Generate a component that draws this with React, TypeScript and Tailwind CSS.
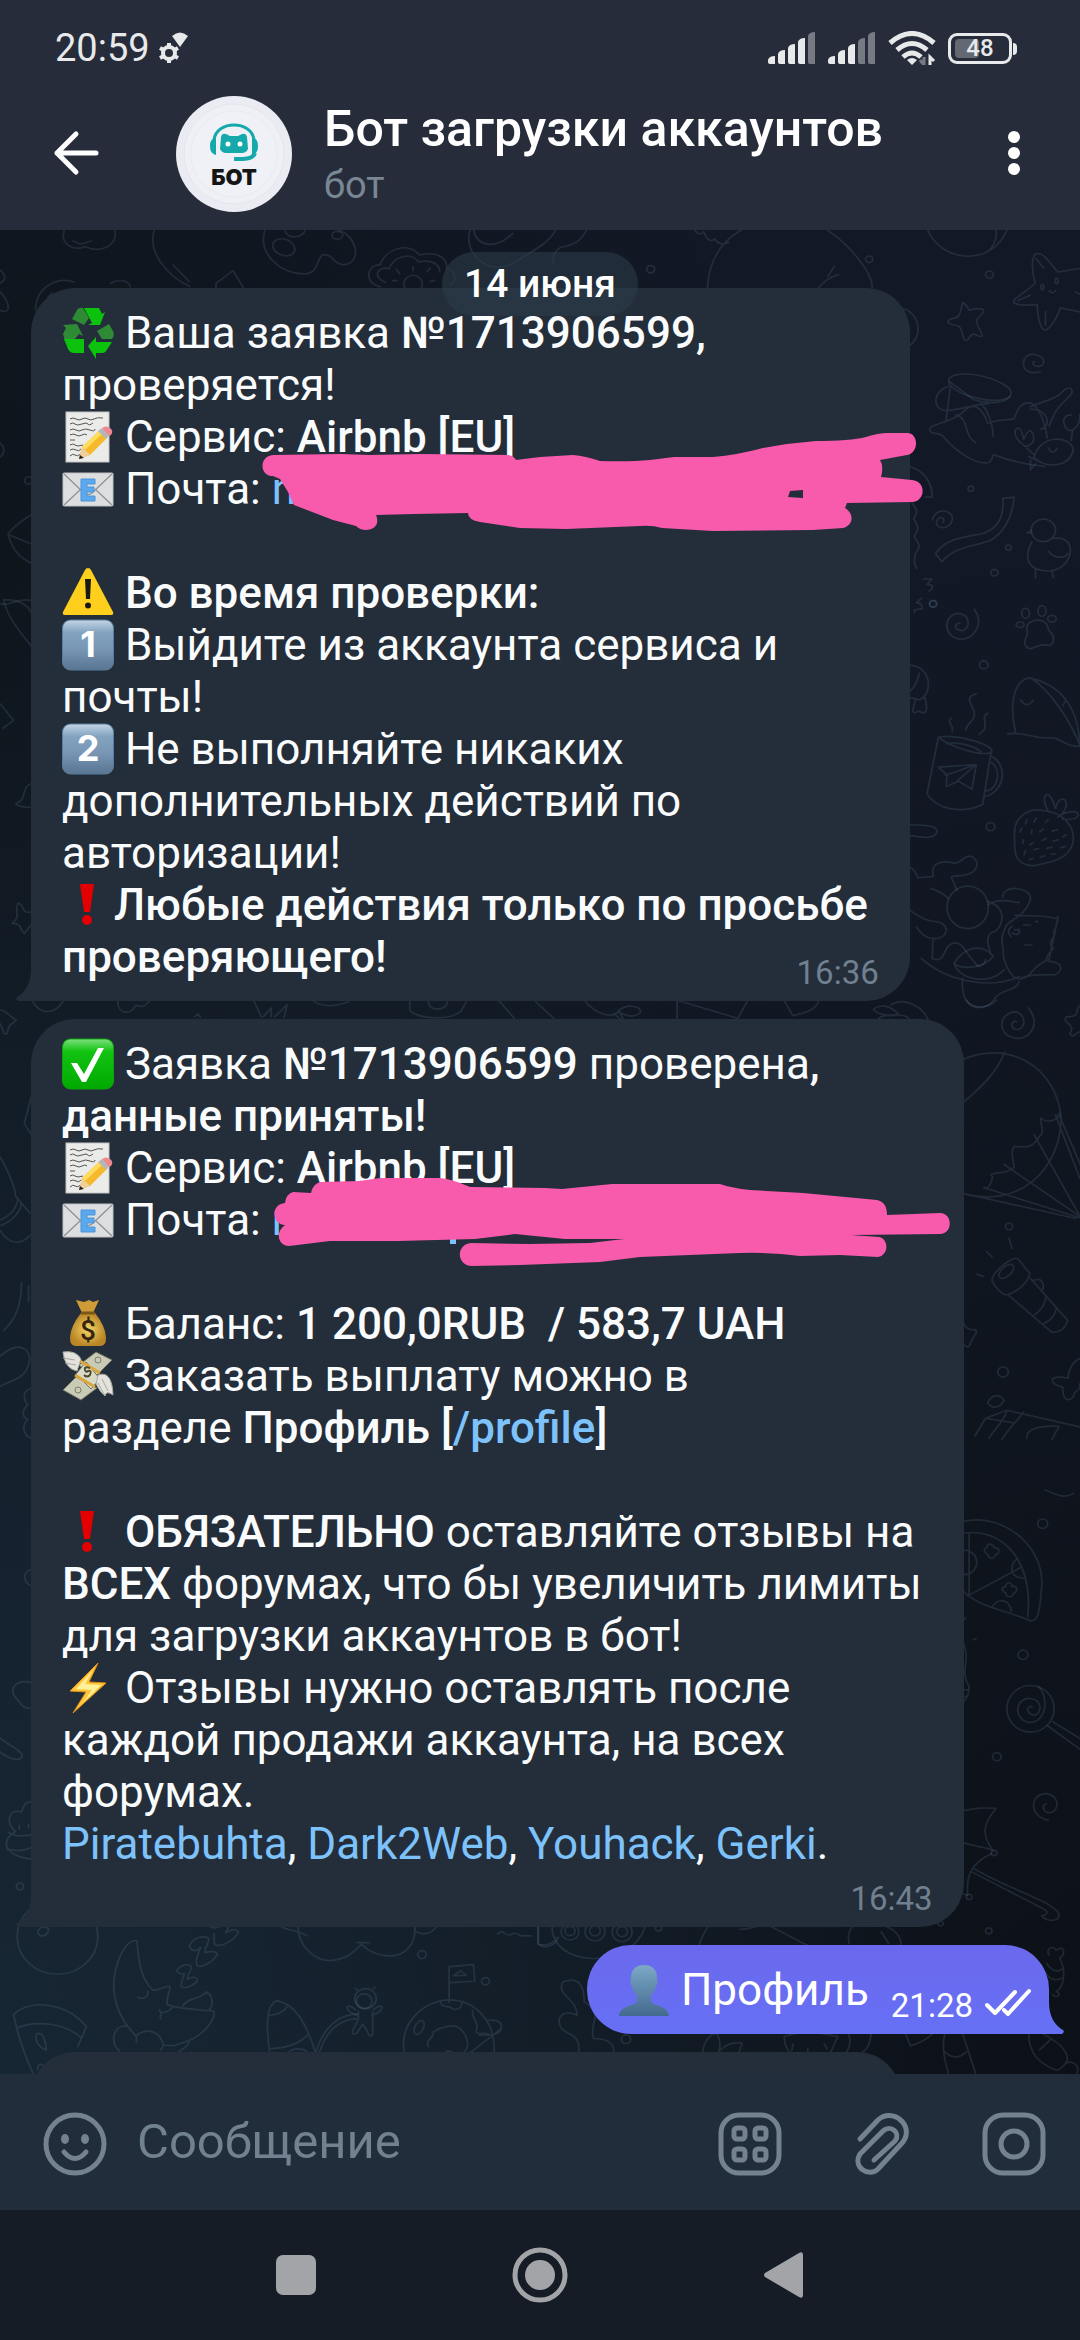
import React from 'react';

const Emoji: React.FC<{ label: string; children: React.ReactNode }> = ({ label, children }) => (
  <svg viewBox="0 0 52 52" role="img" aria-label={label} className="inline-block h-[52px] w-[52px] align-top">
    {children}
  </svg>
);

const Recycle = () => (
  <Emoji label="recycle">
    <path d="M22 1h15l3 6 3-2-5 13H26l4-2-8-15Z" fill="#0cc20c" />
    <path d="M21 1l6 10-5 7-12-6 5-9q2-3 6-2Z" fill="#2f8a35" />
    <path d="M1 18l14-1 6 12-4-2-5 6-9 1-2-7 3-6Z" fill="#2f8a35" />
    <path d="M2 32h20v14H12q-4 0-6-4Z" fill="#0cc20c" />
    <path d="M47 17l4 7q2 4-1 8H40l-5-8 12-7Z" fill="#2f8a35" />
    <path d="M26 39l8-9v5h16l-6 9q-1 2-5 2h-5v6Z" fill="#0cc20c" />
  </Emoji>
);

const Memo = () => (
  <Emoji label="memo">
    <rect x="4" y="1" width="43" height="50" fill="#ebebea" stroke="#c4c4c4" />
    <g stroke="#555" strokeWidth="1" fill="none">
      <path d="M8 8q3-2 6 0t6 0 6 0 6 0 9-1M8 13q3-2 5 0t7 0 6 0 5-1M8 19q3-2 6 0t6 0 8 0 5-1M8 24q3-2 6 0t6 0 5 0" />
      <path d="M8 29h5M8 34q3-2 5 0t8 0M8 39q3-2 6 0t5-1M8 45q3-3 5-1t6-1" />
    </g>
    <path d="M17 48l3-12 18-17 8 7-18 18Z" fill="#f6b92c" />
    <path d="M20 36l18-17 3 3-18 17Z" fill="#ffdc5b" />
    <path d="M17 48l3-12 8 8Z" fill="#efcf9d" />
    <path d="M17 48l1-4 4 3Z" fill="#222" />
    <path d="M36 20l4-3 7 7-3 4Z" fill="#b4b7ba" />
    <path d="M40 17q4-3 8 0t1 7l-2 1Z" fill="#ee8a8f" />
  </Emoji>
);

const Mail = () => (
  <Emoji label="e-mail">
    <rect x="1" y="10" width="50" height="33" rx="1" fill="#dddee0" stroke="#bfc0c2" />
    <path d="M2 11l20 19q4 3 8 0l20-19M2 42l17-16M50 42L33 26" fill="none" stroke="#909396" strokeWidth="1.3" />
    <path d="M19 16h14v5h-8v3h7v5h-7v4h8v5H19Z" fill="#5aa8ee" stroke="#4d93d6" />
  </Emoji>
);

const Warning = () => (
  <Emoji label="warning">
    <path d="M26 1q2 0 3 2l22 42q1 3-2 3H3q-3 0-2-3L23 3q1-2 3-2Z" fill="#ffcf1d" />
    <path d="M23 12h6l-1 20h-4Z" fill="#1b1a12" />
    <circle cx="26" cy="38.500" r="3" fill="#1b1a12" />
  </Emoji>
);

const Keycap: React.FC<{ digit: string }> = ({ digit }) => (
  <Emoji label={`keycap ${digit}`}>
    <defs>
      <linearGradient id={`key${digit}`} x2="0" y2="1">
        <stop offset="0" stopColor="#c2d5e3" />
        <stop offset=".25" stopColor="#83a3c0" />
        <stop offset=".6" stopColor="#7795b3" />
        <stop offset="1" stopColor="#587694" />
      </linearGradient>
    </defs>
    <rect x=".5" y="1" width="51" height="50" rx="8" fill={`url(#key${digit})`} stroke="#5b7d9d" />
    <text x="26" y="38" textAnchor="middle" className="fill-white font-[Inter] text-[36px] font-bold">{digit}</text>
  </Emoji>
);

const Exclamation = () => (
  <Emoji label="exclamation">
    <path d="M18 5h14l-4 28h-6Z" fill="#e20000" />
    <circle cx="25" cy="41" r="5" fill="#e20000" />
  </Emoji>
);

const Check = () => (
  <Emoji label="check">
    <defs>
      <linearGradient id="check" x2="0" y2="1">
        <stop offset="0" stopColor="#7be07b" />
        <stop offset=".25" stopColor="#12c312" />
        <stop offset="1" stopColor="#00a900" />
      </linearGradient>
    </defs>
    <rect x=".5" y="1" width="51" height="50" rx="8" fill="url(#check)" stroke="#10a010" />
    <path d="M9 25h6l7 11L36 10h6L24 44h-4Z" fill="#fff" />
  </Emoji>
);

const MoneyBag = () => (
  <Emoji label="money bag">
    <defs>
      <radialGradient id="bag">
        <stop offset="0" stopColor="#f6d566" />
        <stop offset="1" stopColor="#b98525" />
      </radialGradient>
    </defs>
    <path d="M19 15q-11 14-11 25 0 8 6 8h24q6 0 6-8 0-11-11-25Z" fill="url(#bag)" />
    <path d="M14 2l8 2 5-2 4 2 6-2-6 13H20Z" fill="#cf9b38" />
    <path d="M19 15h14" stroke="#7d5715" strokeWidth="3" />
    <text x="26" y="42" textAnchor="middle" className="fill-[#35250e] font-[Roboto] text-[28px] font-medium">$</text>
  </Emoji>
);

const MoneyWings = () => (
  <Emoji label="money with wings">
    <path d="M1 40l13-13 21 11-16 12Z" fill="#c9cbb6" stroke="#6c705c" />
    <path d="M17 15L34 2l16 8-18 18Z" fill="#c9cbb6" stroke="#6c705c" />
    <path d="M14 24l10-12 14 17-9 10Z" fill="#d9dbc8" stroke="#6c705c" />
    <path d="M18 11l20 12M13 25l20 12" stroke="#dba63b" strokeWidth="3" />
    <path d="M1 2q13-2 18 7l-4 12Q3 19 1 2Zm0 6l12 2M3 13l11 2" fill="#e4e2dc" stroke="#aaa9a0" />
    <path d="M36 25q14-5 15 20-7-5-8 1-5-4-9-12Zm4 4l6 12m-10-8l7 13" fill="#e4e2dc" stroke="#aaa9a0" />
    <path d="M28 18q-6-2-5 2 1 3 3 1 4-1 2 4-3 3-6 0" fill="none" stroke="#4d4a2c" strokeWidth="2" />
    <circle cx="36" cy="10" r="3" fill="none" stroke="#7c806a" />
    <circle cx="16" cy="40" r="3" fill="none" stroke="#7c806a" />
  </Emoji>
);

const Lightning = () => (
  <Emoji label="lightning">
    <path d="M36 1L8 29l16 1L11 51l33-30-17-1Z" fill="#ffc83a" stroke="#e28e15" />
    <path d="M31 8L14 27l16 1-9 13 18-18-16-1Z" fill="#fff19a" />
  </Emoji>
);

const Person = () => (
  <Emoji label="person">
    <defs>
      <linearGradient id="person" x2="0" y2="1">
        <stop offset="0" stopColor="#7da8c6" />
        <stop offset="1" stopColor="#426a8e" />
      </linearGradient>
    </defs>
    <path d="M26 1c9 0 14 6 13 15 1 0 1 4-1 6-1 5-4 8-5 10v6c2 4 17 3 18 14H1c1-11 16-10 18-14v-6c-1-2-4-5-5-10-2-2-2-6-1-6C12 7 17 1 26 1Z" fill="url(#person)" />
  </Emoji>
);

const Wallpaper = () => (
  <svg
    viewBox="0 230 1080 1844"
    preserveAspectRatio="xMidYMin slice"
    aria-hidden="true"
    className="absolute inset-0 h-full w-full"
    fill="none"
    stroke="#86aac6"
    strokeOpacity=".15"
    strokeWidth="5"
    strokeLinecap="round"
    strokeLinejoin="round"
  >
    {/* top left */}
    <g transform="translate(0 230) scale(.357 .333)">
      <path d="M180 0c-12 40 20 64 60 50 40 20 90 0 82-50M205 33l20 10 30-10M432 0c-20 70 40 140 100 170M485 105l45 50M605 160l48-38 28 50M605 160v14M742 0c-20 70 40 130 110 132 50-2 30-60 60-58 25 3 20 30 55 30 50-10 30-90-20-104" />
      <ellipse cx="795" cy="52" rx="32" ry="24" transform="rotate(25 795 52)" />
      <ellipse cx="945" cy="16" rx="15" ry="12" />
      <path d="M800-5c-8 35 60 35 55-5M1065 170c-50-10-35-70 0-65 15-50 80-70 110-30 60-15 80 20 75 40 30 10 30 40 10 50M1080 158c-40-20-20-50 10-42 15-40 65-50 82-20 40-10 60 10 60 30" />
      <circle cx="1157" cy="162" r="26" />
      <path d="M1157 110v12M1110 118l10 14M1205 114l-10 12M1100 152h12M1205 154l12-2" />
      <path d="M100 240c0-70 60-100 108-84M135 200l12-12M310 160c20-14 50-10 55 10M0 120c20 20 16 30 0 40M0 185c40 50 20 70 0 55M88 855c-30 20-55 40-65 58 10 45 30 70 65 88M25 915l63 28M10 1110c50 0 70 20 78 40M10 1110c10 50 40 90 78 140" />
      <circle cx="80" cy="752" r="11" />
      <path d="M0 640c12 8 16 30 0 42" />
    </g>
    {/* top right */}
    <g transform="translate(520 230) scale(.357 .333)">
      <path d="M525 174C530 80 570 30 620 0M860 0c60 40 130 130 126 174M835 174c20-24 40-36 58-40M862 140l18-30M490 0c10 20 20 10 25 5 10 30 22 30 30 22 10 15 24 18 40 10M1142 0c40 100 180 110 222 0M1310 66c20-20 26-40 24-66" />
      <path d="M-140 0c-20 70 50 140 120 100C40 60 80 40 100 0M-130 0c10 50 60 60 110 10M95 100c-10-20 10-50 30-50 40-10 50-30 62-50" />
      <path d="M1065 232c60 20 64 90 24 116M1445 72c20-10 40 30 62 54l70-12M1445 72c-15 10-10 60-2 88-30 30-70 50-58 60 20 10 40 4 64 4 0 40 10 80 24 76 20-10 36-50 40-66l64 14M1445 85l22 30M1395 212l34-16M1472 285v-40M1555 185l20 12" />
      <ellipse cx="1463" cy="172" rx="4" ry="8" />
      <ellipse cx="1503" cy="153" rx="4" ry="8" />
      <path d="M1482 182q10 14 18 0M1240 218c15 4 14 26 22 22 30-8 42-4 34 10-22 20-20 24-10 46 14 26 14 30-14 16-14 0-16 30-28 16-8-20-4-30-16-40-30-6-42-14-16-22 24-4 20-18 28-48Z" />
      <path d="M1458 425c-60 20-60-54-20-52 40 6 34 42 10 36-14-2-14-14-6-14" />
      <ellipse cx="1288" cy="472" rx="90" ry="34" transform="rotate(14 1288 472)" />
      <path d="M1200 470c-40 10-50 66-8 72 40 0 80-20 120-20M1372 500c-10 20-60 24-100 10l-68-54M1205 475l-12 100M1150 592c30-16 70-20 100-54 30-24 50 10 60 42M1150 592c-10 24 20 14 34 26 30 40 90 90 130 80 20-16 0-26 16-22 60 24 100 30 140 34M1220 555c40 10 20 60 56 84M1290 520c20 20 34 60 36 100M1315 580c30-16 70-6 70-16 10-30 20-50 48-44 30 20 40 80 44 104M1430 538c50 0 60 50 30 60M1430 530c30-14 70-20 90-44 10-16 30-14 26 4-30 40-40 30-64 100" />
      <path d="M1440 684c14-70 100-70 110-24-10 50-70 60-110 24ZM1480 654q12 26 24 2M1415 650c-40-30-30-60-16-54 10 10 8 24 12 34 10-30 20-34 26-16 6 20-4 34-22 36ZM1420 655l20 20M1425 680l20 10M1430 690v30l14-18M1545 555c-40 0-16 56 0 46 20-8 26-34 22-46M1548 602l-4 30" />
      <path d="M1090 710c50 14 66 60 64 92h-18M1352 806l32-4c-4 60-30 110-70 132-60 20-100 20-132 62l-18-24c30-50 90-50 130-60 50-16 62-60 58-106ZM1098 820c30 40 0 34 6 50 20 34 6 34 0 50 20 30 16 34 4 50-4 20-6 34 4 46" />
      <path d="M1155 870c10-40 60-30 56 0-6 34-56 30-42 0 10-14 24-2 16 8" />
      <circle cx="1466" cy="902" r="34" />
      <path d="M1434 936c-30 60 0 90 50 88 60-4 78-90 30-98h-20M1434 910h-14l12-8M1480 965c20 26 50 20 54 6M1444 1018v26M1490 1024l4 20M1130 1048h24l-14 16c20 0 18 14 6 20M1125 1105l-14 14 12 4 4 14-22 4v8" />
      <circle cx="366" cy="118" r="11" /><circle cx="978" cy="88" r="10" /><circle cx="1315" cy="134" r="11" />
      <circle cx="1263" cy="777" r="8" /><circle cx="1368" cy="954" r="8" /><circle cx="1329" cy="1029" r="10" /><circle cx="1157" cy="1122" r="10" />
    </g>
    {/* right side, beside the first message */}
    <g transform="translate(520 600) scale(.357 .333)">
      <path d="M1272 28c30 40 0 90-36 90-50-4-54-70-10-78 40 0 36 54 8 52-22-4-14-24-2-22" />
      <path d="M1415 134c-6-20 14-30 4-46 0-20 24-34 46-24 20 10 8 24 22 34 14 16 6 40-10 38-20-6-30 6-46 10-10 0-14-6-16-12Z" />
      <ellipse cx="1416" cy="40" rx="11" ry="15" /><ellipse cx="1462" cy="33" rx="11" ry="16" /><ellipse cx="1490" cy="56" rx="12" ry="10" /><ellipse cx="1401" cy="74" rx="11" ry="8" />
      <path d="M1090 196c60 0 70 80 30 104l-30-8M1118 220c-4 20-14 44-26 54M1108 300c-10 30-10 44 4 36 4-4 6-4 10 0 20 10 20-14 12-42M1388 396c-14-60-14-150 38-162 90 20 140 90 142 206-50 0-50-30-90-26-40 4-60-20-112-12M1430 234c60 40 110 130 138 200M1402 300q20 28 36 0M1520 318l10-18" />
      <path d="M1208 355c-16 10 10 20 2 40M1278 282c-50 14 20 50-16 84-14 16-12 20-14 26M1310 340c-20 10 0 30-10 50l-14 14" />
      <path d="M1172 412c40-10 140 16 150 40-4 24-110-4-150-40ZM1172 412l-32 170c30 50 100 60 156 32l24-160M1195 432c30-8 80 6 96 24M1322 470c50 30 30 110-20 120M1320 488c30 20 20 80-14 86" />
      <path d="M1172 502l106-8-12 74-38-24-34 16 2-34ZM1192 526l86-32-54 50" />
      <path d="M1090 675c60 0 80 6 78 22-6 20-30 18-78 10M1385 700c0-50 40-76 80-68 60 6 90 50 84 96-10 50-60 60-110 70-60 0-54-50-54-98ZM1480 636c-14-26-14-50-4-52 14 0 20 30 24 42 4-20 14-34 26-26 10 14 0 40-20 52 30-22 60-20 58-4-10 14-30 12-44 10" />
      <path d="M1420 660l-4 12M1446 655l-6 12M1480 660l-8 8M1405 685l-4 12M1434 690l-2 12M1466 688l-10 8M1505 690l-14 4M1410 720l-2 10M1438 728l-10 8M1474 716l-12 6M1508 720l-14 4M1530 705l-10 6M1416 752l-4 12M1452 746l-12 4M1490 742l-14 4M1528 740l-14 4M1436 776l-10 4M1470 768l-12 4M1500 762l-12 2" />
      <path d="M1090 800c14 10 22 24 24 34l44-4c-10-40 20-50 60-40 20 0 30-30 50-18 20 14 14 40-10 50-20 10-40 4-50 10l16 40M1150 866c20 6 40 20 50 30M1090 930c50 40 60 30 90 40 30 20 6 50-20 46-24 4-40-20-50-34M1160 1016c-10 20 0 30-6 60 40 20 30-40 60-46 30-4 30 30 70 70 10 0 20-10 20-20" />
      <ellipse cx="1254" cy="923" rx="58" ry="64" />
      <path d="M1312 915c30-20 60-10 86-6M1352 892c0-40 80-30 78 6-14 50-50 60-66 76-20 40-14 60-10 76-4 30 20 90 48 88 40-10 20-30 80-60l24-120c-50-16-90-6-120-12M1506 950c4 30-20 50-8 56-10 20-20 24-4 40-14 20-20 20-20 34M1480 1085c30 0 50 20 20 40-40 0-80 0-98 12M1310 905c60 20 40 80 20 90-30 10-20 40-10 70M1375 1010c-10-10-8-24 4-30M1385 990c10 4 14-6 14 4s-10 14-20 6M1410 976h20M1414 1036h20M1444 966h6M1216 1090c30-50 80-60 110-20-30 40-100 40-110 20Zm0 0c10 50 100 70 140 20M1124 1076c60 60 180 100 276 54M1240 1136c-10 110 70 100 90 60 20-30 60-20 68-50" />
      <path d="M1425 1225c40 60-10 100-40 90-50-10-46-76 4-78 34 10 26 60-2 52-20-10-4-30 4-22M1568 1218c-20 20 10 30-38 34-14 20 30 20 10 50 10 20 20-10 34-6M440 1202v54M440 1202l170 54M638 1202l-28 54M740 1202l24 46c40-10 70-20 72-46M-60 1202l44 54M40 1202l54 54M180 1202c30 40 80 60 98 30 20-20 60-14 60 6-20 20-40 10-60 0 20 30 10 30-14 4M990 1230c20-20 50-10 70 14-20 10-60 0-70-14ZM1040 1216c30-24 90 0 104 48M1005 1256c20-14 70-14 84 0" />
      <circle cx="1299" cy="195" r="12" /><circle cx="1318" cy="681" r="12" /><circle cx="1157" cy="12" r="10" />
    </g>
    {/* left edge */}
    <g transform="translate(0 1000) scale(.357 .333)">
      <path d="M90-1200c-50-10-60 20-88 10M0-890l38 50-30 24M88-650c-30 10-10 50-44 60 10 14 30 10 44 12M50-290c20 0 6 30 36 26M50-290c-10 20 10 40-16 60 30 0 20 20 34 30l18-24" />
      <path d="M0 30c20 0 24 20 46 30-20 20-20 10-26 40-10 10-14-20-20-30M92 5c20 40 60 40 84 0M330 5c0 40 40 40 50 10 20 10 30 0 40-14M712 5l20 46M738 50l22-26v26M770 50l34-36-8 38M545 50l10-8 6 10M880 5c30 20 70 10 96 0M1148 5v28c40 30 120 24 144 0l14-28M1200 5c0 30 50 30 54 0M88 290l-20 80 20 36M0 470c20 40 40 80 44 120l40 50M0 660c30-10 50-40 50-66M0 678c40-14 60-50 60-70M0 692c30 50 60 40 86 14M60 850c0 60-14 110-50 142M80 860v46M0 1070c60-60 100-10 76 36-10 30-50 40-76 54M88 1165c-30 10-20 40-10 50-20 20-14 40 0 44-20 20-10 50 8 56M88 1710c-30 10-20 40 0 50M88 2050c-40-14-70 20-40 50 10 10 14 30 38 26" />
      <path d="M0 2216c20 20 50 30 62 50 4 20-30 20-62-8M88 2408c-30 0-20 30-30 30-40-10-40 40-14 60-40 20-40 70 44 82M24 2500c20 14 40 10 62 8M20 2550c30 8 50 4 66-4M54 2480v10M80 2476v10" />
      <circle cx="56" cy="2662" r="10" />
    </g>
    {/* bottom */}
    <g transform="translate(0 1900) scale(.357 .333)">
      <circle cx="161" cy="110" r="113" />
      <path d="M106 100c0-20 20-24 30-14 0 20-20 30-30 14ZM384 125c4 60 10 110 44 146 20 4 40-20 48-10 0 20-14 40-6 54 40 14 80 14 128 18 10 14-20 80-100 100-10 10-30 0-40 4-10-54-60-50-76-28-60-60-70-140-60-190 10-50 30-90 50-96 8-2 12 0 12 2ZM386 292c20 10 30-4 28-18M447 330c10 20-4 20 4 26M450 340c20-4 30-10 34-20M512 318c10-24 50-20 66-42 20 10 20 40 8 54M336 456c-30-30-20-80 20-78M382 428v-22M450 450l8-14M500 456c10-10 24-10 30-30" />
      <path d="M495 212c14-20 30-20 40-14 4 14-14 30-10 40 10-10 30-6 28 4-10 16-34 24-44 20-6-14 4-24 8-42-10 4-18 2-22-8ZM530 138c14-30 40-30 54-24 4 14-14 34-10 44 10-4 36-6 34 6-10 20-40 40-54 34-10-14 0-30 8-56-10 14-24 14-32-4ZM590 82c10 4 20 0 24-2M600 100v30c10 20 60-10 68-34-10-14-24-4-36 2l8-16" />
      <path d="M38 344c50-50 150-34 204 36l-24 60M38 344c10 50 30 120 54 176M50 384c50-24 130-14 176 28M102 404c10-10 24 0 28 46-20-4-34-30-28-46ZM105 510c0-20 10-20 20-10M835 82c0 50 40 100 92 100 40-4 60-20 86-50 40 50 150 60 150-50M1000 128h34M790 82c20 10 50 10 70 26M1160 90c20 20 50 10 60-8M755 456c-10-80-10-140 20-154 50 10 80 60 108 154M755 346c20 0 40-10 48-24M755 446c40 0 80-10 110-44M810 456c10-12 40-12 50 0M885 456c20-70 60-110 116-114M895 456c20-60 50-96 104-100" />
      <circle cx="1024" cy="296" r="30" /><circle cx="1020" cy="304" r="22" />
      <path d="M1000 270l-4-4M1046 266l4-4M996 330c-20-20-34-10-14 8l18 8M1046 330c20-20 34-10 14 8l-18 8M1004 334v24l-16 34c-4 14 8 14 14 4l14-24 14 24c4 18 16 14 14 0v-60" />
      <path d="M1132 456c-14-90 60-156 126-156 70 0 130 60 126 156M1258 308V200l68-6 4 50-68 4M1270 228l20-16 16 14ZM1234 306c4 20 20 10 30 18 10 10 28 4 30-14M1325 332c-10 20 20 30 8 64 10 14 30-10 50 20M1366 362c50-10 50 40 10 44h-34M1400 390l-80 66M1200 440c-10-20 14-20 14-44 20-14 60-30 80-4 20 24 20 50 6 64M1250 456c10-8 10 0 16 0" />
      <ellipse cx="1174" cy="383" rx="12" ry="22" transform="rotate(25 1174 383)" />
      <path d="M1394 102c20-20 20 14 40 0 20-10 20 14 34 4l22 2M1508 82v50c20 20 50 0 56-20" />
      <circle cx="1182" cy="164" r="12" /><circle cx="1360" cy="244" r="11" />
    </g>
    {/* right side, beside the second message */}
    <g transform="translate(520 1000) scale(.357 .333)">
      <path d="M1238 180c120-60 260 10 278 170 0 160-120 280-278 230M1240 310c40-40 90-80 118-154M1250 0c20 30 60 26 86 0M1500 345l68 190M1510 345l60 150M1300 562c10 10 20-10 24-30-20-20 40-4 60-30-4-30-10-50 0-62 30 0 50 10 70-30 20-10 0-40 6-56 10 14 40 14 50-10l4-10M1238 580l320 76M1300 564l268 90M1356 494l212 156M1440 404l128 244" />
      <path d="M1326 850c-20-20 50-80 66-74 14 10 20 30 36 44-4 30-40 60-66 66-20-8-30-24-36-36Z" />
      <ellipse cx="1362" cy="815" rx="26" ry="14" transform="rotate(-45 1362 815)" />
      <path d="M1370 888l120 110c30 0 40-20 44-36L1430 836M1440 842c20-10 30 10 24 28M1438 948c20-14 34-30 36-60M1466 972c20-10 30-20 36-44M1378 746l-8-30M1308 756l14 16M1280 824l18 6M1240 950c0 30 14 44 36 40 10 10-10 20-14 40-4 20-14 10-24 0M1568 1076c-20 10-30 30-34 60-60-14-50 20-14 26 0 50 20 40 30 30 4-30 20-10 18-40M1310 1210c10-24 30-30 46-8-10 20-30 30-46 8ZM1274 1310l30-54 60-24 204 50M1304 1256l80 14M1364 1232c-10 40-40 60-50 84M1410 1238c-20 30-50 60-60 82M1420 1316c-4-20 20-40 90-36l-20 40" />
      <circle cx="1370" cy="680" r="10" /><circle cx="1353" cy="1117" r="15" />
    </g>
    <g transform="translate(520 1490) scale(.357 .333)">
      <path d="M1238 95c120-30 240 80 222 210-4 60-10 90-30 88-60-30-150-40-192-94M1238 130c120-20 200 90 184 252M1258 130v190M1254 318l150-86M1238 180c60 0 50 80 0 74M1394 205c-24 20-24 60 20 60M1322 354c10-30 50-30 54 10" />
      <path d="M1308 174c0-20 20-10 20 0 20-4 14 20 4 20 0 14-24 14-20 0-14-4-14-20-4-20ZM1360 290c4-20 20-10 18 0 20-4 14 20 4 20 0 14-24 14-20 0-14-4-14-20-2-20Z" />
      <ellipse cx="1430" cy="657" rx="66" ry="70" />
      <path d="M1452 590c30 30 24 110-26 108-46-10-40-74 4-72 40 4 30 60 2 48-20-14-4-30 2-22M1478 708l90 70M1492 696l76 50M1480 992c-60-14-50-84-2-80 40 10 30 64-2 56-16-10-10-24-2-26M1238 964c40-10 60-10 96-8-40 50-40 80-10 126-20-10-50-10-84-24M1320 1092c-60 30-70 70-66 126l-24-10M1270 1136c60 40 140 70 206 106 30 20 40 30 30 46-20 10-40 0-44-10 20-4 20-14-6-26L1264 1146M1470 0c30 10 50 30 80 10M1248 384l-8 10M1278 446l-8 4M1238 450c30 60-10 90 20 140 0 30-10 40-20 50M1240 600h16M1240 620h12" />
      <circle cx="1464" cy="101" r="14" /><circle cx="1409" cy="495" r="14" /><circle cx="1336" cy="801" r="12" /><circle cx="1328" cy="1090" r="8" /><circle cx="1258" cy="1222" r="8" /><circle cx="1313" cy="1324" r="9" /><circle cx="1178" cy="1302" r="7" />
    </g>
    <g transform="translate(520 1900) scale(.357 .333)">
      <path d="M50 82v50c30 10 50-10 50-20M90 82c0 120 220 130 260 0M500 140c10-30 20-50 26-60M616 88c20 0 30-4 46-8M706 82c40 20 70 40 104 56M922 130c-4-20 0-40 10-50M1030 82c30 14 40 40 36 54M1012 96l20 34M164 456c10-70-60-40-54-100 10-20 30-20 50-10 0-50-60-60-40-100 50-20 60 20 60 60 60 40 10 60 26 110 30 0 60 10 56 40M512 456c0-20 20-60 40-54 10 20 10 40 4 54M556 456c20-24 40-30 66-26l-8 26M740 410c50-20 110-10 150 0-10 20-10 30-20 46M740 410c0 20 6 34 14 46M765 432l-4 20M806 446v10M852 432l8 14M920 402c10 30 0 40-4 54M984 402c-4 30-14 50-24 54M1080 402l14 36c30-10 50-24 62-36M1190 402c-10 40 0 80 10 118M1240 402l36 118M1190 456c20 20 40 20 60 0M1425 402c0 60 30 90 80 110 50-30 30-70-40-110M1455 450l30-30M1530 490c20-10 40 10 30 30" />
      <path d="M1482 165c-10-20 10-30 20-14 20-20 30 10 10 24 20 40 10 90-10 100 20 10 0 20-10 10M1476 190c10 20 30 30 44 16M1474 220c10 20 30 24 44 14" />
      <circle cx="140" cy="95" r="25" /><circle cx="210" cy="95" r="28" /><circle cx="286" cy="97" r="28" />
      <circle cx="140" cy="93" r="14" /><circle cx="210" cy="93" r="15" /><circle cx="286" cy="95" r="15" />
      <circle cx="297" cy="418" r="13" /><circle cx="388" cy="84" r="9" />
    </g>
  </svg>
);

const Tail: React.FC<{ side: 'in' | 'out' }> = ({ side }) => (
  <svg
    viewBox="0 0 16 44"
    aria-hidden="true"
    className={side === 'in' ? 'absolute bottom-0 -left-[15px] h-11 w-4' : 'absolute bottom-0 -right-[15px] h-11 w-4 -scale-x-100'}
  >
    <path d="M16 0v44H2q-3-2-1-4Q15 32 15 12V0Z" fill={side === 'in' ? '#232e3a' : '#6670f5'} />
  </svg>
);

const Incoming: React.FC<{ time: string; className: string; children: React.ReactNode }> = ({ time, className, children }) => (
  <article className={`relative w-fit rounded-[44px] rounded-bl-none bg-[#232e3a] pt-[19px] pr-[42px] pl-[31px] ${className}`}>
    <p>{children}</p>
    <time className="absolute right-[31px] bottom-2 text-[33px] leading-10 text-[#718090]">{time}</time>
    <Tail side="in" />
  </article>
);

const B: React.FC<{ children: React.ReactNode }> = ({ children }) => <b className="font-medium">{children}</b>;

const Link: React.FC<{ children: React.ReactNode }> = ({ children }) => (
  <a href="#" className="text-[#7ec2fb]">{children}</a>
);

const SignalBars: React.FC<{ level: number }> = ({ level }) => (
  <svg viewBox="0 0 48 32" aria-hidden="true" className="h-8 w-12">
    {[8, 14, 20, 26, 32].map((height, i) => (
      <path
        key={height}
        d={`M${i * 10} 30v${6 - height}q1-4 7-4v${height}h-5q-2 0-2-2Z`}
        fill={i < level ? '#e8e9ea' : '#767a83'}
      />
    ))}
  </svg>
);

const StatusBar = () => (
  <div className="flex h-24 items-center justify-between pr-[68px] pl-[55px] text-[#e8e9ea]">
    <div className="flex items-center gap-2">
      <span className="text-[38px] leading-none">20:59</span>
      <svg viewBox="0 0 32 32" aria-hidden="true" className="h-8 w-8">
        <circle cx="11" cy="21" r="6" fill="none" stroke="currentColor" strokeWidth="4" />
        <path d="M11 11v20M2 16l18 10M2 26l18-10" stroke="currentColor" strokeWidth="4" />
        <circle cx="11" cy="21" r="4" fill="#272c3a" />
        <path d="M14 4q8-7 16 0l-8 11Z" fill="currentColor" />
      </svg>
    </div>
    <div className="flex items-center gap-3">
      <SignalBars level={4} />
      <SignalBars level={3} />
      <svg viewBox="0 0 48 34" aria-hidden="true" className="h-[34px] w-12">
        <g fill="none" stroke="currentColor" strokeWidth="5">
          <path d="M2 12q22-19 44 0M9 19q15-13 30 0M15 26q9-8 18 0" />
        </g>
        <path d="M19 29q5-4 10 0l-5 5Z" fill="currentColor" />
        <path d="M36 26v8l-4-5" fill="none" stroke="#767a83" strokeWidth="3" />
        <path d="M42 34v-8l4 4" fill="none" stroke="currentColor" strokeWidth="3" />
      </svg>
      <div className="relative flex h-[31px] w-16 items-center justify-center rounded-[9px] border-3 border-[#e8e9ea]">
        <span className="absolute inset-y-[3px] left-1 w-6 rounded-sm bg-[#646873]" />
        <span className="relative text-2xl leading-none font-medium">48</span>
        <span className="absolute top-[7px] -right-2 h-3 w-1 rounded-r-sm bg-[#e8e9ea]" />
      </div>
    </div>
  </div>
);

const Header = () => (
  <header className="shrink-0 bg-[#272c3a] pb-[18px]">
    <StatusBar />
    <div className="flex h-[116px] items-center pr-9 pl-12">
      <button type="button" aria-label="Назад" className="text-white">
        <svg viewBox="0 0 56 56" className="h-14 w-14" fill="none" stroke="currentColor" strokeWidth="5" strokeLinecap="round" strokeLinejoin="round">
          <path d="M48 27H9M28 8L9 27l19 19" />
        </svg>
      </button>
      <svg viewBox="0 0 116 116" role="img" aria-label="БОТ" className="ml-[72px] h-[116px] w-[116px]">
        <circle cx="58" cy="58" r="58" fill="#ebecf3" />
        <circle cx="58" cy="58" r="50" fill="#efeff6" stroke="#e4e5ee" />
        <circle cx="58" cy="58" r="43" fill="#f0f1f7" stroke="#e9eaf2" />
        <g fill="none" stroke="#15a9ab" strokeWidth="3">
          <path d="M38 44C40 24 76 24 78 44" />
          <path d="M79 57q-2 6-12 6h-9" strokeWidth="4" />
        </g>
        <path d="M40 42q-6 0-6 8t6 9ZM76 42q6 0 6 8t-6 9ZM45 41q1-4 5-3l4 2h8l4-2q4-1 5 3l1 12q-2 4-6 4H50q-4 0-6-4Z" fill="#15a9ab" />
        <circle cx="52" cy="48" r="2.500" fill="#fff" />
        <circle cx="64" cy="48" r="2.500" fill="#fff" />
        <text x="58" y="89" textAnchor="middle" className="fill-[#151515] font-[Inter] text-[22px] font-black">БОТ</text>
      </svg>
      <div className="ml-8 flex min-w-0 flex-1 flex-col gap-1">
        <h1 className="text-[50px] leading-[58px] font-medium whitespace-nowrap text-white">Бот загрузки аккаунтов</h1>
        <p className="text-[38px] leading-[46px] text-[#788793]">бот</p>
      </div>
      <button type="button" aria-label="Меню" className="text-white">
        <svg viewBox="0 0 60 60" className="h-[60px] w-[60px]" fill="currentColor">
          <circle cx="30" cy="13" r="6" />
          <circle cx="30" cy="29" r="6" />
          <circle cx="30" cy="45" r="6" />
        </svg>
      </button>
    </div>
  </header>
);

const Composer = () => (
  <form className="flex h-[136px] shrink-0 items-center bg-[#222d3b] pr-[30px] pl-[39px] text-[#74818f]">
    <button type="button" aria-label="Эмодзи">
      <svg viewBox="0 0 72 72" className="h-[72px] w-[72px]" fill="none" stroke="currentColor" strokeWidth="5" strokeLinecap="round">
        <circle cx="36" cy="38" r="29" />
        <path d="M25 46q11 13 22 0" />
        <g fill="currentColor" stroke="none">
          <ellipse cx="26" cy="33" rx="4" ry="5" />
          <ellipse cx="46" cy="33" rx="4" ry="5" />
        </g>
      </svg>
    </button>
    <input
      type="text"
      aria-label="Сообщение"
      placeholder="Сообщение"
      className="ml-[26px] min-w-0 flex-1 bg-transparent text-[49px] leading-[58px] text-white outline-none placeholder:text-[#72818f]"
    />
    <button type="button" aria-label="Клавиатура бота">
      <svg viewBox="0 0 72 72" className="h-[72px] w-[72px]" fill="none" stroke="currentColor" strokeWidth="5">
        <rect x="7" y="9" width="58" height="58" rx="18" />
        <rect x="20" y="22" width="11" height="11" rx="3" />
        <rect x="41" y="22" width="11" height="11" rx="3" />
        <rect x="20" y="43" width="11" height="11" rx="3" />
        <rect x="41" y="43" width="11" height="11" rx="3" />
      </svg>
    </button>
    <button type="button" aria-label="Прикрепить" className="ml-[60px]">
      <svg viewBox="0 0 72 72" className="h-[72px] w-[72px]" fill="none" stroke="currentColor" strokeWidth="5" strokeLinecap="round" strokeLinejoin="round">
        <path d="M14 33L32 14c14-13 37 5 25 22L32 63c-9 9-26-2-18-15l23-23c8-7 18 2 12 10L28 54" />
      </svg>
    </button>
    <button type="button" aria-label="Камера" className="ml-[60px]">
      <svg viewBox="0 0 72 72" className="h-[72px] w-[72px]" fill="none" stroke="currentColor" strokeWidth="5">
        <rect x="7" y="9" width="58" height="58" rx="18" />
        <circle cx="36" cy="38" r="13" />
      </svg>
    </button>
  </form>
);

const NavBar = () => (
  <nav className="flex h-[130px] shrink-0 items-center justify-center gap-[184px] bg-[#161c26] text-[#a2a4a8]">
    <button type="button" aria-label="Недавние">
      <svg viewBox="0 0 60 60" className="h-[60px] w-[60px]" fill="currentColor">
        <rect x="10" y="10" width="40" height="40" rx="7" />
      </svg>
    </button>
    <button type="button" aria-label="Домой">
      <svg viewBox="0 0 60 60" className="h-[60px] w-[60px]" fill="currentColor">
        <circle cx="30" cy="30" r="25" fill="none" stroke="currentColor" strokeWidth="5" />
        <circle cx="30" cy="30" r="15" />
      </svg>
    </button>
    <button type="button" aria-label="Назад">
      <svg viewBox="0 0 60 60" className="h-[60px] w-[60px]" fill="currentColor">
        <path d="M11 32q-2-2 0-4l34-20q4-2 4 2v40q0 4-4 2Z" />
      </svg>
    </button>
  </nav>
);

const App: React.FC = () => {
  return (
    <div className="flex h-screen flex-col overflow-hidden bg-[#161c26] font-[Roboto,sans-serif]">
      <Header />

      <main className="relative min-h-0 flex-1 overflow-hidden bg-[radial-gradient(ellipse_at_0%_100%,#172633_0%,transparent_60%),radial-gradient(ellipse_at_100%_100%,#0c1117_0%,transparent_60%),radial-gradient(ellipse_at_0%_20%,#0e151b_0%,transparent_50%),linear-gradient(#121825,#131b27)]">
        <Wallpaper />
        <div className="relative flex flex-col gap-[18px] px-[31px] pt-[58px] text-[44px] leading-[52px] whitespace-nowrap text-[#fafbfc]">
          <Incoming time="16:36" className="pb-[18px]">
            <Recycle /> Ваша заявка <B>№1713906599,</B><br />
            проверяется!<br />
            <Memo /> Сервис: <B>Airbnb [EU]</B><br />
            <Mail /> Почта: <Link>n</Link><br />
            <br />
            <Warning /> <B>Во время проверки:</B><br />
            <Keycap digit="1" /> Выйдите из аккаунта сервиса и<br />
            почты!<br />
            <Keycap digit="2" /> Не выполняйте никаких<br />
            дополнительных действий по<br />
            авторизации!<br />
            <Exclamation /><B>Любые действия только по просьбе</B><br />
            <B>проверяющего!</B>
            <svg viewBox="31 288 900 260" aria-hidden="true" className="absolute top-0 left-0 h-[260px] w-[900px]">
              <path
                fill="#f85aac"
                fillRule="evenodd"
                d="M273 476c-14 0-14-20 0-21l67-1 30 1 50-1 88 1q6 1 8 5l24-3 33-2q12 1 27 6 30 1 50-1l24-3h39q24-2 50-9 26-5 53-7 34 0 50-4 12-4 22-4h19c12 0 12 20 0 22l-27 5q4 6 1 17l31 3c14 1 14 20 1 22l-66 1-2 5c10 6 8 18-2 20l-30 2-100 1-51-3q-10-3-22-2l-74 3-46-1-40-6q-12-2-12-9l-54 1-38 1c4 10-2 15-10 15q-6 0-10-4l-23-6-39-15-6-13-8-13Zm515 21l15 1v-8l-13 1Z"
              />
            </svg>
          </Incoming>

          <Incoming time="16:43" className="pb-[57px]">
            <Check /> Заявка <B>№1713906599</B> проверена<B>,</B><br />
            <B>данные приняты!</B><br />
            <Memo /> Сервис: <B>Airbnb [EU]</B><br />
            <Mail /> Почта: <Link>n</Link><br />
            <br />
            <MoneyBag /> Баланс: <B>1 200,0RUB&nbsp; / 583,7 UAH</B><br />
            <MoneyWings /> Заказать выплату можно в<br />
            разделе <B>Профиль [<Link>/profile</Link>]</B><br />
            <br />
            <Exclamation /> <B>ОБЯЗАТЕЛЬНО</B> оставляйте отзывы на<br />
            <B>ВСЕХ</B> форумах, что бы увеличить лимиты<br />
            для загрузки аккаунтов в бот!<br />
            <Lightning /> Отзывы нужно оставлять после<br />
            каждой продажи аккаунта, на всех<br />
            форумах.<br />
            <Link>Piratebuhta</Link>, <Link>Dark2Web</Link>, <Link>Youhack</Link>, <Link>Gerki</Link>.
            <svg viewBox="31 1019 920 260" aria-hidden="true" className="absolute top-0 left-0 h-[260px] w-[920px]">
              <path d="M450 1238h6v6h-6Z" fill="#7ec2fb" />
              <path
                fill="#f85aac"
                d="M285 1225c-13 0-15-21 0-22q1-9 8-11l18 1q1-8 9-11l40-1 20-3h60q12 1 30 9l75 1 17 1 50-5h108q12 4 30 6l53 3 74 7q10 2 10 15l53-2c13 0 13 21 0 21l-89 1 28 2c10 2 10 18-1 20l-38-2-40 1q-30-4-60-3l-100 4-40 5-80 3-48 1c-16 0-16-22-1-23l59 1 60-1 34-4h-59l-50-5-40 5-77 2-68 0-41 5c-10 0-15-13-4-21Z"
              />
            </svg>
          </Incoming>

          <article className="relative flex w-fit items-end self-end rounded-[44px] rounded-br-none bg-linear-to-b from-[#6b69ed] to-[#6670f5] pt-[19px] pr-[18px] pb-[18px] pl-[31px] text-white">
            <p><Person /> Профиль</p>
            <time className="-mb-2.5 ml-[22px] text-[33px] leading-10">21:28</time>
            <svg viewBox="0 0 46 28" aria-hidden="true" className="ml-3 h-7 w-[46px]" fill="none" stroke="currentColor" strokeWidth="4" strokeLinecap="round" strokeLinejoin="round">
              <path d="M2 17l8 8L30 4M19 22l4 4L44 3" />
            </svg>
            <Tail side="out" />
          </article>

          <article aria-label="Сообщение" className="h-[200px] w-[870px] max-w-full rounded-t-[44px] bg-[#232e3a]" />
        </div>

        <div className="absolute inset-x-0 top-[22px] flex justify-center">
          <span className="rounded-full bg-[#2c3a48]/60 px-[22px] text-[39px] leading-[64px] font-medium text-white">14 июня</span>
        </div>
      </main>

      <Composer />
      <NavBar />
    </div>
  );
};

export default App;
